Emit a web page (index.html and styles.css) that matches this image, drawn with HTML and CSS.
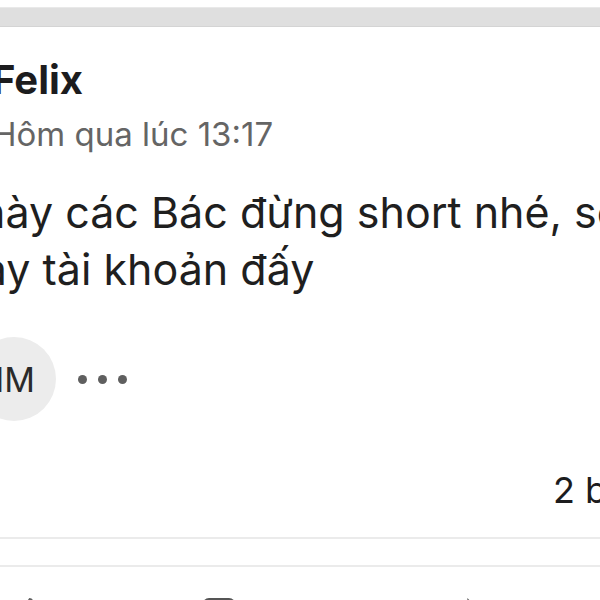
FILE: index.html
```html
<!DOCTYPE html>
<html lang="vi">
<head>
    <meta charset="UTF-8">
    <meta name="viewport" content="width=device-width, initial-scale=1.0">
    <title>Bài viết - Felix</title>
    <link rel="stylesheet" href="styles.css">
</head>
<body>
    <div class="topbar"></div>
    <article class="post">
        <header class="post-head">
            <h2 class="author">Felix</h2>
            <div class="time">Hôm qua lúc 13:17</div>
        </header>
        <p class="post-text">
            <span class="line first">này các Bác đừng short nhé, sẽ</span>
            <span class="line">bay tài khoản đấy</span>
        </p>
        <div class="reactors">
            <div class="avatar">HM</div>
            <div class="more">
                <span class="dot"></span>
                <span class="dot"></span>
                <span class="dot"></span>
            </div>
        </div>
        <div class="stats">2 bình luận</div>
        <div class="divider"></div>
        <div class="gap"></div>
        <div class="divider"></div>
        <div class="actions">
            <div class="action">
                <svg class="icon" viewBox="0 0 24 24"><path d="M7 10v10H3V10h4zm2 10V10l5-7c1.5 0 2.5 1 2.2 2.6L15.5 9H20c1.2 0 2 1 1.8 2.2l-1.4 7C20.2 19.3 19.4 20 18.3 20H9z" fill="#5f5f5f"/></svg>
                <span>Thích</span>
            </div>
            <div class="action">
                <svg class="icon" viewBox="0 0 24 24"><rect x="2" y="3" width="20" height="15" rx="4" fill="#555"/><path d="M7 17l-2 5 7-5z" fill="#555"/></svg>
                <span>Bình luận</span>
            </div>
            <div class="action">
                <svg class="icon" viewBox="0 0 24 24"><path d="M14 3l8 8-8 8v-5c-6 0-9 2-12 6 1-6 4-11 12-12V3z" fill="#5f5f5f"/></svg>
                <span>Chia sẻ</span>
            </div>
        </div>
    </article>
</body>
</html>
```

FILE: styles.css
```css
body {
    margin: 0;
    width: 600px;
    height: 600px;
    overflow: hidden;
    background-color: #fff;
    color: #1c1c1e;
    font-family: Inter, "Noto Sans", sans-serif;
}
.topbar {
    margin-top: 7px;
    height: 18px;
    background-color: #dfdfdf;
    border-top: 1px solid #e9e9e9;
    border-bottom: 1px solid #d4d4d4;
}
.post {
    margin-left: -8px;
    width: 760px;
    white-space: nowrap;
}
.post-head {
    padding-top: 30px;
}
.author {
    margin: 0;
    font-size: 40px;
    line-height: 46px;
    font-weight: 700;
}
.time {
    margin-top: 11px;
    font-size: 33px;
    line-height: 40px;
    color: #656565;
}
.post-text {
    margin: 30px 0 0;
    font-size: 43px;
    line-height: 57px;
    color: #1f1f1f;
}
.line {
    display: block;
    margin-left: -36px;
}
.line.first {
    text-indent: 24px;
}
.reactors {
    display: flex;
    align-items: center;
    gap: 22px;
    margin-top: 39px;
    margin-left: -20px;
}
.avatar {
    width: 84px;
    height: 84px;
    box-sizing: border-box;
    padding-right: 14px;
    border-radius: 50%;
    background-color: #ececec;
    color: #2a2a2a;
    font-size: 34px;
    display: flex;
    align-items: center;
    justify-content: center;
}
.more {
    display: flex;
    gap: 11px;
}
.dot {
    width: 9px;
    height: 9px;
    border-radius: 50%;
    background-color: #5f5f5f;
}
.stats {
    padding-left: 561px;
    margin-top: 49px;
    font-size: 36px;
    line-height: 40px;
}
.divider {
    height: 2px;
    background-color: #ebebeb;
}
.stats + .divider {
    margin-top: 27px;
}
.gap {
    height: 26px;
}
.actions {
    display: flex;
    gap: 60px;
    padding: 26px 0 0 14px;
    color: #555;
    font-size: 30px;
}
.action {
    display: flex;
    align-items: center;
    gap: 14px;
}
.icon {
    width: 40px;
    height: 40px;
}
```
